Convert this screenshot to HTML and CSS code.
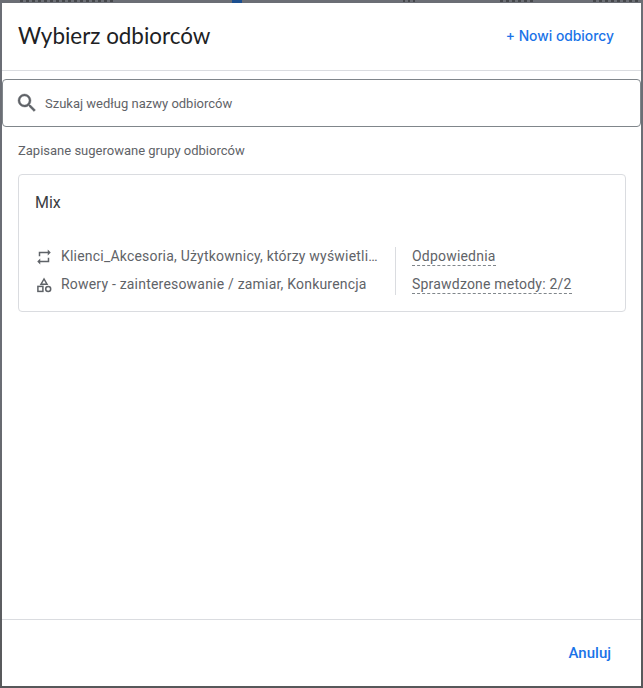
FILE: index.html
```html
<!DOCTYPE html>
<html lang="pl">
<head>
<meta charset="utf-8">
<title>Wybierz odbiorców</title>
<link rel="stylesheet" href="styles.css">
</head>
<body>
<div class="behind" aria-hidden="true">
  <span class="bit bit-a"></span>
  <span class="bit bit-icon"></span>
  <span class="bit bit-b"></span>
  <span class="bit bit-c"></span>
  <span class="bit bit-d"></span>
</div>
<div class="dialog">
  <header class="head">
    <h1 class="title">Wybierz odbiorców</h1>
    <a class="new">+ Nowi odbiorcy</a>
  </header>
  <div class="search">
    <svg class="search-icon" viewBox="0 0 24 24" width="24" height="24"><path d="M15.5 14h-.79l-.28-.27A6.47 6.47 0 0 0 16 9.5 6.5 6.5 0 1 0 9.5 16c1.61 0 3.09-.59 4.23-1.57l.27.28v.79l5 4.99L20.49 19l-4.99-5zm-6 0C7.01 14 5 11.99 5 9.5S7.01 5 9.5 5 14 7.01 14 9.5 11.99 14 9.5 14z"/></svg>
    <span class="placeholder">Szukaj według nazwy odbiorców</span>
  </div>
  <div class="body">
    <div class="label">Zapisane sugerowane grupy odbiorców</div>
    <section class="card">
      <div class="card-name">Mix</div>
      <div class="card-info">
        <div class="lists">
          <div class="row">
            <svg class="row-icon" viewBox="0 0 24 24" width="18" height="18"><path d="M7 7h10v3l4-4-4-4v3H5v6h2V7zm10 10H7v-3l-4 4 4 4v-3h12v-6h-2v4z"/></svg>
            <span class="row-text">Klienci_Akcesoria, Użytkownicy, którzy wyświetli…</span>
          </div>
          <div class="row">
            <svg class="row-icon row-icon-line" viewBox="0 0 18 18" width="18" height="18"><path d="M9 3 6 8.2h6z"/><rect x="2.9" y="10.4" width="5" height="5"/><circle cx="13.2" cy="12.9" r="2.5"/></svg>
            <span class="row-text">Rowery - zainteresowanie / zamiar, Konkurencja</span>
          </div>
        </div>
        <div class="divider"></div>
        <div class="status">
          <div class="status-row"><span class="dashed">Odpowiednia</span></div>
          <div class="status-row"><span class="dashed">Sprawdzone metody: 2/2</span></div>
        </div>
      </div>
    </section>
  </div>
  <footer class="foot">
    <a class="cancel">Anuluj</a>
  </footer>
</div>
</body>
</html>
```
FILE: styles.css
```css
* { box-sizing: border-box; }
html, body { height: 100%; }
body {
  margin: 0;
  padding: 0 2px 2px;
  background: linear-gradient(#6b6e75, #6b6e75 55%, #57585a);
  font-family: Roboto, "Liberation Sans", sans-serif;
  overflow: hidden;
}
.behind { height: 3px; overflow: hidden; position: relative; }
.bit { position: absolute; top: 0; height: 2px; }
.bit-a { left: 18px; width: 96px; background: repeating-linear-gradient(90deg, #45474b 0 3px, transparent 3px 6px); }
.bit-icon { left: 230px; width: 10px; height: 3px; background: #1c4f8f; }
.bit-b { left: 401px; width: 12px; background: repeating-linear-gradient(90deg, #45474b 0 2px, transparent 2px 5px); }
.bit-c { left: 498px; width: 36px; background: repeating-linear-gradient(90deg, #45474b 0 3px, transparent 3px 6px); }
.bit-d { left: 591px; width: 46px; background: repeating-linear-gradient(90deg, #45474b 0 3px, transparent 3px 6px); }
.dialog {
  height: 683px;
  background: #fff;
  display: flex;
  flex-direction: column;
}
.head {
  height: 68px;
  flex: none;
  padding: 0 27px 2px 16px;
  display: flex;
  align-items: center;
  justify-content: space-between;
  border-bottom: 1px solid #dadce0;
}
.title {
  margin: 0;
  font-family: Lato, Roboto, sans-serif;
  font-size: 22.4px;
  font-weight: 400;
  color: #202124;
}
.new {
  font-family: Inter, Roboto, sans-serif;
  font-size: 13.85px;
  font-weight: 500;
  color: #1a73e8;
}
.search {
  margin-top: 8px;
  height: 48px;
  flex: none;
  border: 1px solid #80868b;
  border-radius: 4px;
  display: flex;
  align-items: center;
  padding-left: 12px;
  gap: 6px;
}
.search-icon { fill: #5f6368; stroke: #5f6368; stroke-width: 0.4; flex: none; }
.placeholder { font-size: 13px; color: #5f6368; }
.body { flex: 1; padding: 15px 15px 0 16px; }
.label { font-size: 13px; line-height: 16px; margin-top: 1px; color: #5f6368; }
.card {
  margin-top: 15px;
  height: 138px;
  border: 1px solid #dadce0;
  border-radius: 4px;
  padding: 18px 16px 0;
}
.card-name { font-size: 16px; line-height: 20px; color: #3c4043; }
.card-info { margin-top: 29px; display: flex; align-items: flex-start; }
.lists { width: 360px; flex: none; }
.row { display: flex; align-items: center; height: 28px; gap: 8px; }
.row-icon { fill: #5f6368; flex: none; margin-top: 2px; }
.row-icon-line { fill: none; stroke: #5f6368; stroke-width: 1.5; }
.row-text { font-size: 14px; letter-spacing: 0.2px; color: #5f6368; white-space: nowrap; }
.divider { width: 1px; height: 48px; margin-top: 5px; background: #dadce0; flex: none; }
.status { padding-left: 16px; }
.status-row { height: 28px; display: flex; align-items: center; }
.dashed { font-size: 14px; letter-spacing: 0.2px; line-height: 18px; color: #5f6368; border-bottom: 1px dashed #80868b; }
.foot {
  height: 67px;
  flex: none;
  border-top: 1px solid #dadce0;
  display: flex;
  align-items: center;
  justify-content: flex-end;
  padding-right: 30px;
}
.cancel { font-size: 15px; font-weight: 500; color: #1a73e8; }
```
